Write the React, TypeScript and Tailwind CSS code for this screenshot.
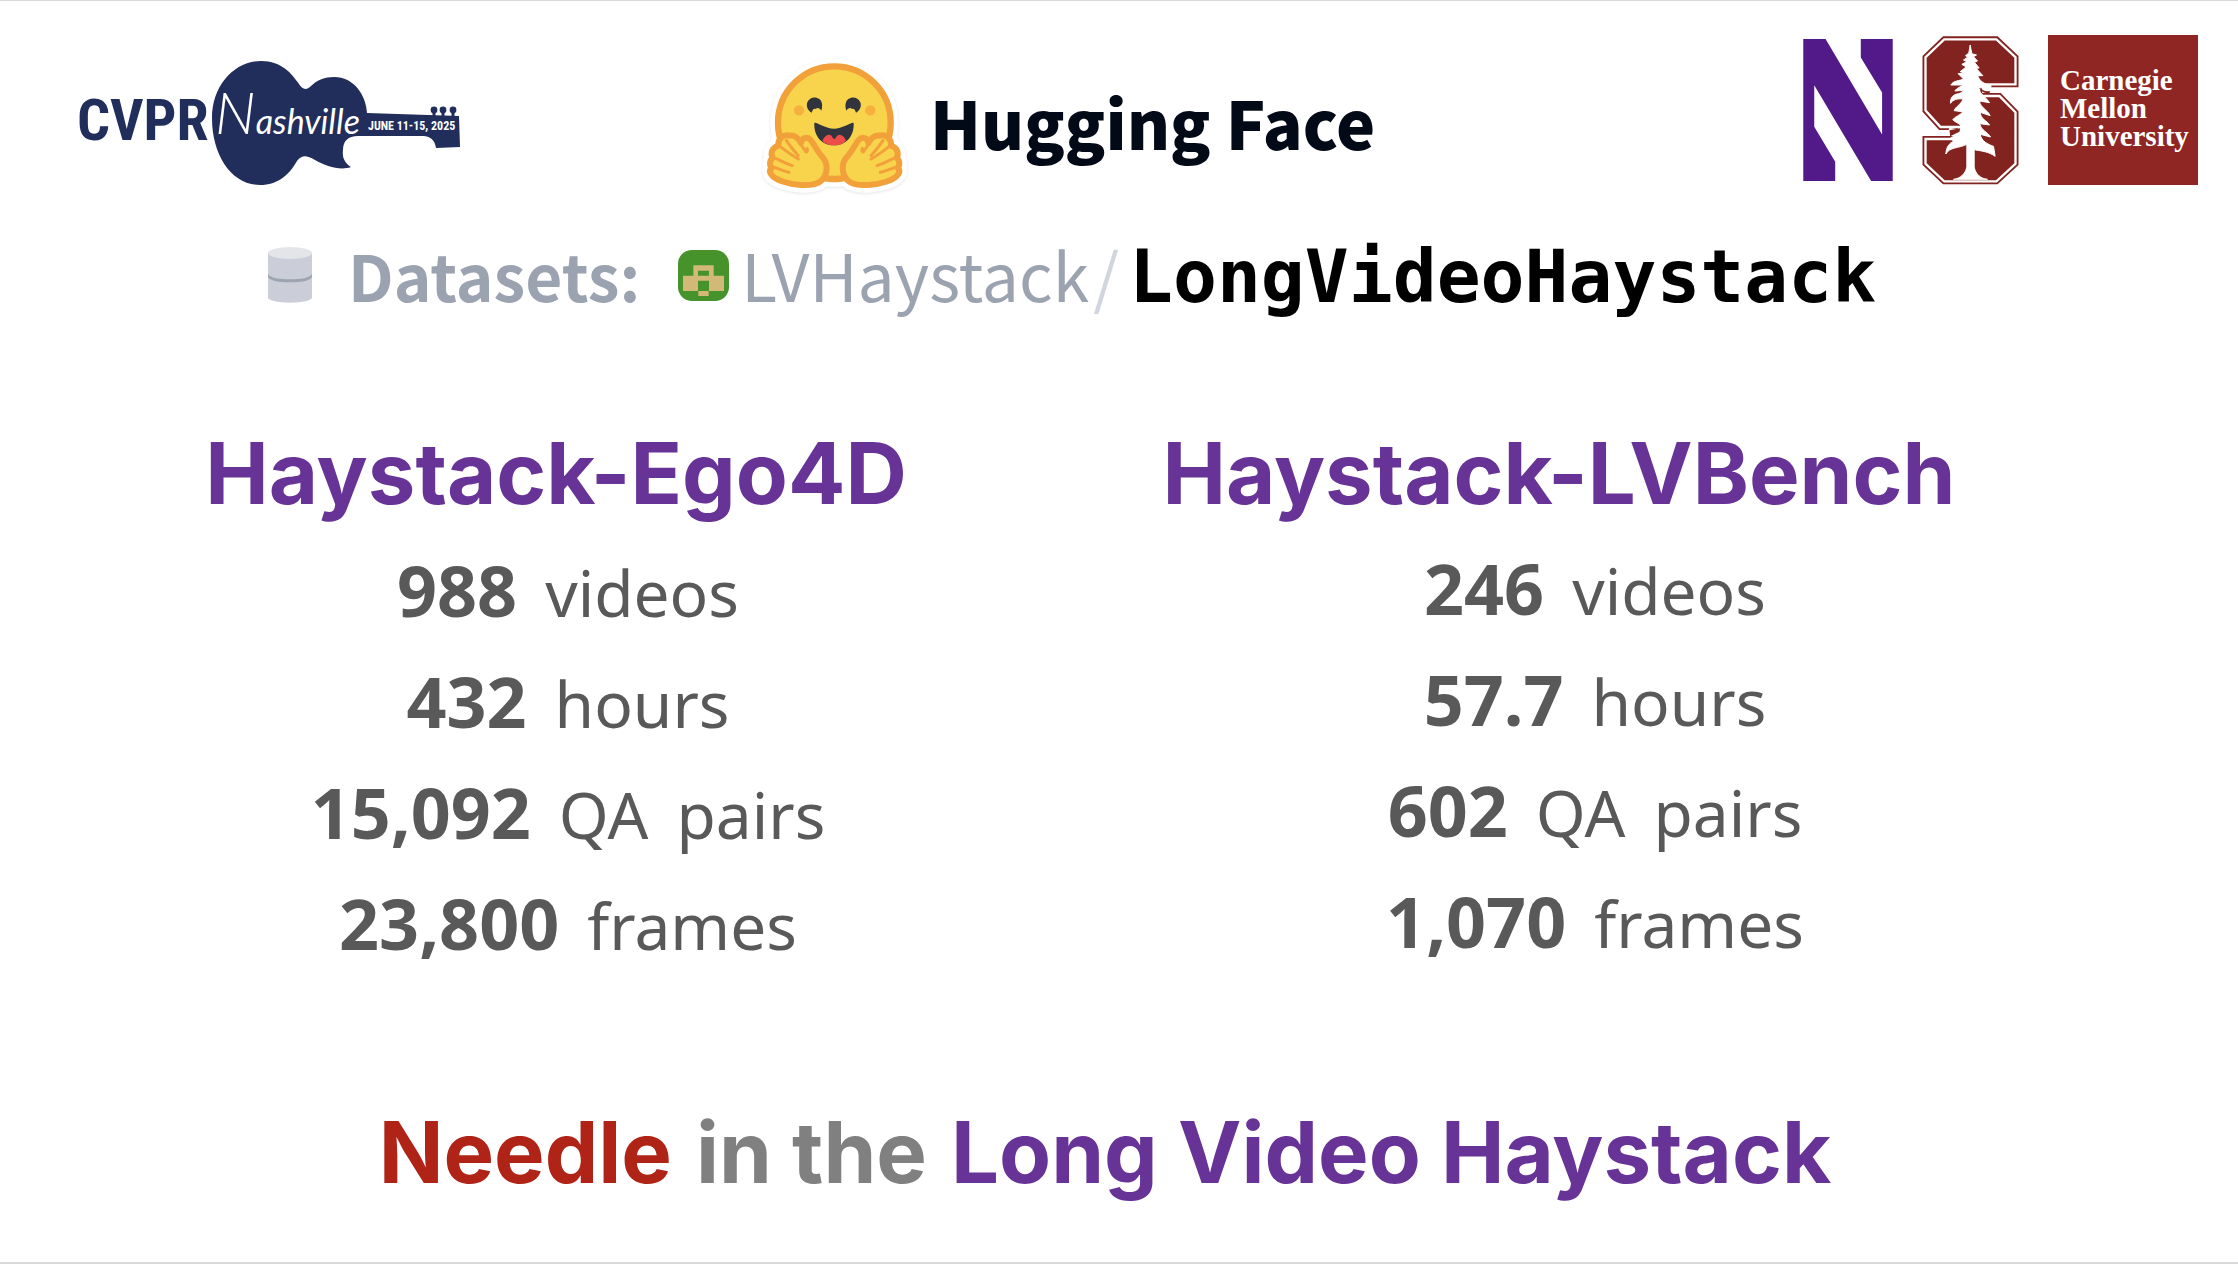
import React from "react";

type Stat = { value: string; unit: string[] };

const ego4d: Stat[] = [
  { value: "988", unit: ["videos"] },
  { value: "432", unit: ["hours"] },
  { value: "15,092", unit: ["QA", "pairs"] },
  { value: "23,800", unit: ["frames"] },
];

const lvbench: Stat[] = [
  { value: "246", unit: ["videos"] },
  { value: "57.7", unit: ["hours"] },
  { value: "602", unit: ["QA", "pairs"] },
  { value: "1,070", unit: ["frames"] },
];

function CvprLogo() {
  return (
    <svg viewBox="75 55 390 135" className="h-[135px] w-[390px]" role="img" aria-label="CVPR Nashville">
      <text x="77" y="140" fontSize="58" fontWeight="700" fill="#212d5b" fontFamily="'Roboto Condensed','Liberation Sans Narrow','DejaVu Sans Condensed',Roboto,sans-serif">
        CVPR
      </text>
      <path
        fill="#212d5b"
        d="M261 61C282 61 292 74 299 84C302 89 306 91 311 86C317 80 325 77 334 77C354 77 366 95 367 113L459 116L460 147L436 148C435 140 430 136 423 136L358 136C348 136 343 141 343 150C342 158 345 163 351 167C340 171 326 166 315 160C306 155 302 155 297 161C289 175 278 185 260 185C232 185 212 156 212 118C212 86 234 61 261 61Z"
      />
      <g fill="#212d5b">
        <circle cx="434" cy="110" r="3.4" />
        <circle cx="443" cy="110" r="3.4" />
        <circle cx="453" cy="110" r="3.4" />
        <path d="M432.5 110h3v7h-3zM441.5 110h3v7h-3zM451.5 110h3v7h-3z" />
      </g>
      <text x="215" y="134" fill="#fff" fontStyle="italic" fontFamily="Lato,sans-serif" fontSize="34">
        <tspan fontSize="58" fontWeight="300">N</tspan>
        <tspan>ashville</tspan>
      </text>
      <text x="368" y="130" fontSize="12" fontWeight="700" fill="#fff" fontFamily="'Roboto Condensed','Liberation Sans Narrow','DejaVu Sans Condensed',Roboto,sans-serif">
        JUNE 11-15, 2025
      </text>
    </svg>
  );
}

const handShape =
  "M150 404C110 402 72 388 62 374C55 366 56 358 62 352C54 343 56 330 65 322C58 310 62 292 82 286C80 264 98 250 116 256C132 254 142 264 150 278C152 262 168 258 178 268C190 282 200 306 216 322C232 342 230 372 212 390C198 404 172 405 150 404Z";

const eyeShape =
  "M182 187C169 181 165 166 169 156C175 141 193 137 205 146C215 154 215 168 211 181C206 173 199 171 194 176C188 173 184 180 182 187Z";

function Hand() {
  return (
    <g>
      <path d={handShape} fill="#f8d44d" stroke="#f2a13a" strokeWidth="18" strokeLinejoin="round" />
      <g fill="none" stroke="#f2a13a" strokeWidth="9" strokeLinecap="round" strokeLinejoin="round">
        <path d="M84 286C98 296 116 312 142 326" />
        <path d="M68 322C86 328 98 338 124 346" />
        <path d="M64 350C82 354 96 362 114 366" />
        <path d="M106 270C116 286 128 300 142 316" />
        <path d="M146 274C150 288 160 294 164 304C168 308 172 298 168 294" />
      </g>
    </g>
  );
}

function HuggingFaceLogo() {
  return (
    <svg viewBox="30 20 447 420" className="h-[140px] w-[149px]" role="img" aria-label="Hugging face emoji">
      <g className="drop-shadow-[0_3px_5px_rgba(0,0,0,0.1)]">
        <g fill="#fff" stroke="#fff" strokeWidth="46" strokeLinejoin="round">
          <circle cx="250" cy="217" r="169" />
          <path d={handShape} />
          <path d={handShape} transform="translate(502 0) scale(-1 1)" />
        </g>
      </g>
      <circle cx="250" cy="217" r="169" fill="#f8d44d" stroke="#f2a13a" strokeWidth="19" />
      <g fill="#31343c">
        <path d={eyeShape} />
        <path d={eyeShape} transform="translate(497 0) scale(-1 1)" />
        <path d="M190 218C194 212 222 235 249 235C276 235 304 212 308 218C310 250 292 285 249 285C206 285 188 250 190 218Z" />
      </g>
      <path d="M214 271C222 254 236 249 242 257C245 262 247 266 250 266C253 266 254 261 258 257C266 249 278 255 285 271C275 281 264 285 250 285C235 285 223 281 214 271Z" fill="#ee4c48" />
      <circle cx="144" cy="180" r="15.5" fill="#f5b03e" />
      <circle cx="358" cy="180" r="15.5" fill="#f5b03e" />
      <Hand />
      <g transform="translate(502 0) scale(-1 1)">
        <Hand />
      </g>
    </svg>
  );
}

function NorthwesternLogo() {
  return (
    <svg viewBox="69 56 269 427" className="h-[142px] w-[90px]" role="img" aria-label="Northwestern">
      <path fill="#521a88" d="M69 56H136L306 343V217L242 112V56H338V483H273L102 195V320L165 425V483H69Z" />
    </svg>
  );
}

const blockS =
  "M105 34H256L309 84V155H200V204H265L309 249V397L256 446H105L53 397V333H160V283H94L53 238V84Z";

function StanfordLogo() {
  return (
    <svg viewBox="36 17 290 447" className="h-[149px] w-[97px]" role="img" aria-label="Stanford">
      <path d={blockS} fill="#82231f" stroke="#82231f" strokeWidth="32" />
      <path d={blockS} fill="#82231f" stroke="#fff" strokeWidth="21" />
      <path d={blockS} fill="#82231f" stroke="#82231f" strokeWidth="7" />
      <path
        fill="#fff"
        stroke="#fff"
        strokeWidth="3"
        d="M180 44L185 70L199 74L190 79L202 92L193 96L207 113L198 114L218 136L203 136C206 150 222 162 243 166L239 180C226 178 212 172 202 168C206 190 226 198 238 217L208 212C210 232 232 238 240 256L210 246C212 268 230 270 238 284L209 280C212 300 232 304 241 320L210 312C214 334 234 342 250 348L255 378C236 364 214 362 192 358V410C196 432 212 445 232 447H130C150 445 166 430 170 410V342C146 354 118 350 107 371C108 350 118 338 130 333L122 322L150 310L116 312L118 294L142 298L152 284L132 272L128 268C134 258 150 256 158 244L132 241C136 228 150 226 159 206C142 204 128 208 121 219C120 202 128 192 146 190C152 188 156 186 159 180L134 182C140 172 152 170 158 164L122 164C130 150 148 152 160 146L144 130L164 128L150 124L168 110L155 102L170 94L160 89L173 80L166 76L176 68Z"
      />
      <path d="M118 300L150 294L148 304L120 318Z" fill="#82231f" />
      <path d="M206 172C216 180 226 184 240 182L238 188C222 190 212 182 206 172Z" fill="#82231f" />
    </svg>
  );
}

function DatabaseIcon() {
  return (
    <svg viewBox="55 41 132 168" className="h-14 w-11" aria-hidden="true">
      <path d="M55 58V192C55 202 84 208 121 208C158 208 187 202 187 192V58Z" fill="#cbced8" />
      <path d="M55 122C62 134 90 138 121 138C152 138 180 134 187 122V131C180 143 152 147 121 147C90 147 62 143 55 131Z" fill="#9da3b0" />
      <ellipse cx="121" cy="59" rx="66" ry="18" fill="#e4e5e9" />
    </svg>
  );
}

function Avatar() {
  return (
    <svg viewBox="0 0 153 153" className="h-[51px] w-[51px]" aria-hidden="true">
      <rect width="153" height="153" rx="42" fill="#46922b" />
      <path fill="#d2b978" d="M46 46H107V77H138V123H15V77H46Z" />
      <path fill="#46922b" d="M60 62H93V77H60ZM60 92H93V123H60Z" />
      <path fill="#d2b978" d="M61 123H92V138H61Z" />
    </svg>
  );
}

function StatList({ items, className }: { items: Stat[]; className: string }) {
  return (
    <ul className={`leading-[109px] text-[#595959] ${className}`}>
      {items.map((s) => (
        <li key={s.unit[0]} className="flex items-baseline justify-center gap-7">
          <strong className="text-[70px] font-bold">{s.value}</strong>
          {s.unit.map((word) => (
            <span key={word} className="text-[64px]">
              {word}
            </span>
          ))}
        </li>
      ))}
    </ul>
  );
}

export default function App() {
  return (
    <main className="flex min-h-screen flex-col border-t border-b-2 border-[#d9d9d9] bg-white font-['Noto_Sans',sans-serif]">
      <header className="flex items-start pt-[34px]">
        <div className="w-[34%] pt-5 pl-[75px]">
          <CvprLogo />
        </div>
        <div className="flex items-start gap-5 pt-[22px]">
          <HuggingFaceLogo />
          <span className="pt-6 font-['Noto_Sans_CJK_SC',sans-serif] text-[66px] leading-[80px] font-black whitespace-nowrap text-[#020a18]">
            Hugging Face
          </span>
        </div>
        <div className="ml-auto flex items-center gap-[29px] pr-10">
          <NorthwesternLogo />
          <StanfordLogo />
          <div className="flex h-[150px] w-[150px] items-center bg-[#8f2623] pb-1 pl-3 font-['Liberation_Serif',serif] text-[29px] leading-7 font-bold text-white">
            <p>
              Carnegie
              <br />
              Mellon
              <br />
              University
            </p>
          </div>
        </div>
      </header>

      <div className="mt-7 flex items-baseline pl-[268px] font-['Noto_Sans_CJK_SC',sans-serif] leading-[96px] whitespace-nowrap text-[#9ca3b0]">
        <div className="self-center">
          <DatabaseIcon />
        </div>
        <span className="ml-9 text-[64px] font-bold">Datasets:</span>
        <div className="ml-[38px] self-center">
          <Avatar />
        </div>
        <span className="ml-3 text-[66px]">LVHaystack</span>
        <span className="ml-1 text-[66px] text-[#d1d5dd]">/</span>
        <h1 className="ml-2.5 font-['DejaVu_Sans_Mono',monospace] text-[73px] font-bold text-black">LongVideoHaystack</h1>
      </div>

      <div className="mt-[97px] grid grid-cols-[1112fr_894fr_232fr]">
        <section>
          <h2 className="text-center font-['Inter',sans-serif] text-[85px] leading-[104px] font-bold whitespace-nowrap text-[#673397]">
            Haystack-Ego4D
          </h2>
          <StatList items={ego4d} className="pt-2.5 pl-6" />
        </section>
        <section>
          <h2 className="text-center font-['Inter',sans-serif] text-[85px] leading-[104px] font-bold whitespace-nowrap text-[#673397]">
            Haystack-LVBench
          </h2>
          <StatList items={lvbench} className="pt-2 pl-[72px]" />
        </section>
      </div>

      <p className="mt-[121px] flex justify-center gap-6 pr-7 font-['Inter',sans-serif] text-[85px] leading-[104px] font-bold whitespace-nowrap text-[#673397]">
        <span className="text-[#b02418]">Needle</span>
        <span className="text-[#808080]">in the</span>
        <span>Long Video Haystack</span>
      </p>
    </main>
  );
}
